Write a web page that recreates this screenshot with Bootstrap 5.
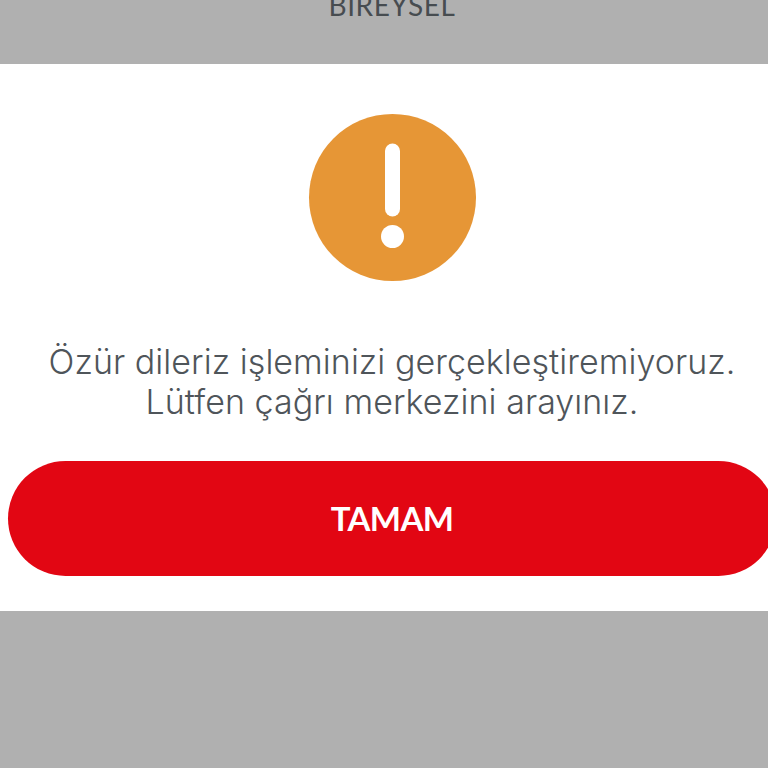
<!DOCTYPE html>
<html lang="tr">
<head>
  <meta charset="UTF-8" />
  <meta name="viewport" content="width=device-width, initial-scale=1.0" />
  <title>Uyarı</title>
  <link href="https://cdn.jsdelivr.net/npm/bootstrap@5.3.3/dist/css/bootstrap.min.css" rel="stylesheet" />
  <style>
    body {
      background-color: #b0b0b0;
      font-family: "Lato", "Open Sans", sans-serif;
      height: 768px;
      overflow: hidden;
    }
    .top-strip {
      height: 64px;
      overflow: hidden;
      padding-left: 16px;
    }
    .top-strip span {
      color: #474c50;
      font-size: 28px;
      line-height: 28px;
      margin-bottom: 45px;
      letter-spacing: 0.6px;
    }
    .alert-panel {
      height: 547px;
      overflow: hidden;
    }
    .alert-inner {
      width: 768px;
      margin-left: 8px;
      padding-top: 50px;
    }
    .warn-icon {
      width: 168px;
      height: 168px;
    }
    .alert-text {
      color: #4f555a;
      font-family: "Inter", "Lato", sans-serif;
      font-weight: 300;
      font-size: 34px;
      line-height: 40px;
      letter-spacing: 0.05px;
      margin: 60px 0 39px;
      white-space: nowrap;
    }
    .ok-btn {
      height: 115px;
      border: 0;
      border-radius: 58px;
      background-color: #e20613;
      color: #fff;
      font-size: 33px;
      font-weight: 700;
      letter-spacing: -0.6px;
    }
  </style>
</head>
<body>
  <div class="top-strip d-flex justify-content-center align-items-end">
    <span>BİREYSEL</span>
  </div>
  <div class="alert-panel bg-white">
    <div class="alert-inner text-center">
      <svg class="warn-icon d-block mx-auto" viewBox="0 0 168 168" aria-hidden="true">
        <circle cx="84.5" cy="83.5" r="83.5" fill="#e69636" />
        <rect x="77" y="29.5" width="15" height="73" rx="7.5" fill="#fff" />
        <circle cx="84.5" cy="122.5" r="11.5" fill="#fff" />
      </svg>
      <p class="alert-text">Özür dileriz işleminizi gerçekleştiremiyoruz.<br />Lütfen çağrı merkezini arayınız.</p>
      <button type="button" class="btn ok-btn w-100">TAMAM</button>
    </div>
  </div>

  <script src="https://cdn.jsdelivr.net/npm/bootstrap@5.3.3/dist/js/bootstrap.bundle.min.js"></script>
</body>
</html>
